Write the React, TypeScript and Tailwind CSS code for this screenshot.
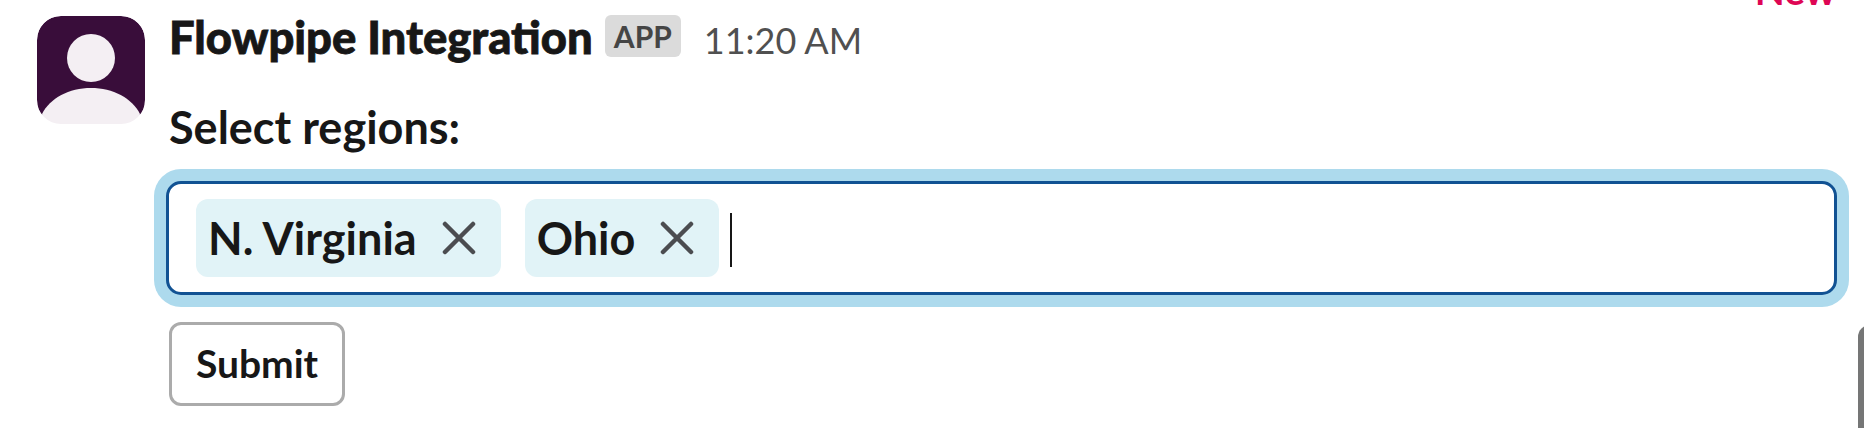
import React from "react";

function Avatar() {
  return (
    <svg className="mt-4 block size-[108px] shrink-0 rounded-[24px]" viewBox="0 0 108 108">
      <path d="M24 0H84A24 24 0 0 1 108 24V84Q108 94 103 99H5Q0 94 0 84V24A24 24 0 0 1 24 0z" fill="#390d3a" />
      <circle cx="54" cy="42" r="24" fill="#f4eff3" />
      <path d="M0 108L5 98C13 82 32 72 54 72s41 10 49 26l5 10z" fill="#f4eff3" />
    </svg>
  );
}

function Chip({ label }: { label: string }) {
  return (
    <div className="flex h-[78px] items-center rounded-[12px] bg-[#e1f3f7] pl-3 pr-[25px]">
      <span className="text-[45px] leading-[66px] font-bold">{label}</span>
      <button type="button" aria-label={`Remove ${label}`} className="ml-[25px]">
        <svg
          className="block size-[34px]"
          viewBox="0 0 34 34"
          fill="none"
          stroke="#4b4c50"
          strokeWidth="4.5"
          strokeLinecap="round"
        >
          <path d="M3 3l28 28M31 3L3 31" />
        </svg>
      </button>
    </div>
  );
}

export default function App() {
  return (
    <div className="relative flex h-[428px] w-full gap-6 overflow-hidden bg-white pl-[37px] pr-[27px] font-['Lato',sans-serif] text-[#171717]">
      <Avatar />
      <main className="flex min-w-0 grow flex-col items-start pt-1">
        <header className="flex h-[66px] items-start whitespace-nowrap">
          <span className="text-[45.4px] leading-[66px] font-black [-webkit-text-stroke:0.8px_#171717]">
            Flowpipe Integration
          </span>
          <span className="mt-[11px] ml-3 flex h-[42px] w-[76px] items-center justify-center rounded-[6px] bg-[#dbdbdb] text-[30px] font-bold text-[#454545]">
            APP
          </span>
          <time className="ml-[23px] pt-[3px] text-[36px] leading-[66px] text-[#505050]">11:20 AM</time>
        </header>
        <label className="mt-[24px] text-[45px] leading-[66px] font-bold">Select regions:</label>
        <div className="mt-[21px] -ml-[3px] flex h-[114px] items-center self-stretch rounded-[15px] border-[3px] border-[#115293] bg-white pl-[27px] shadow-[0_0_0_12px_#addaed]">
          <Chip label="N. Virginia" />
          <div className="ml-[24px]">
            <Chip label="Ohio" />
          </div>
          <span className="ml-[11px] mt-1 h-[54px] w-[2px] bg-[#171717]" />
        </div>
        <button
          type="button"
          className="mt-[27px] flex h-[84px] w-[176px] items-center justify-center rounded-[12px] border-[3px] border-[#ababab] pb-0.5 text-[39px] font-bold"
        >
          Submit
        </button>
      </main>
      <span className="absolute -top-[33px] right-[28px] text-[39px] leading-[47px] font-bold text-[#de0654]">
        New
      </span>
      <span className="absolute top-[325px] -right-[18px] h-[160px] w-6 rounded-[12px] bg-[#757676]" />
    </div>
  );
}
